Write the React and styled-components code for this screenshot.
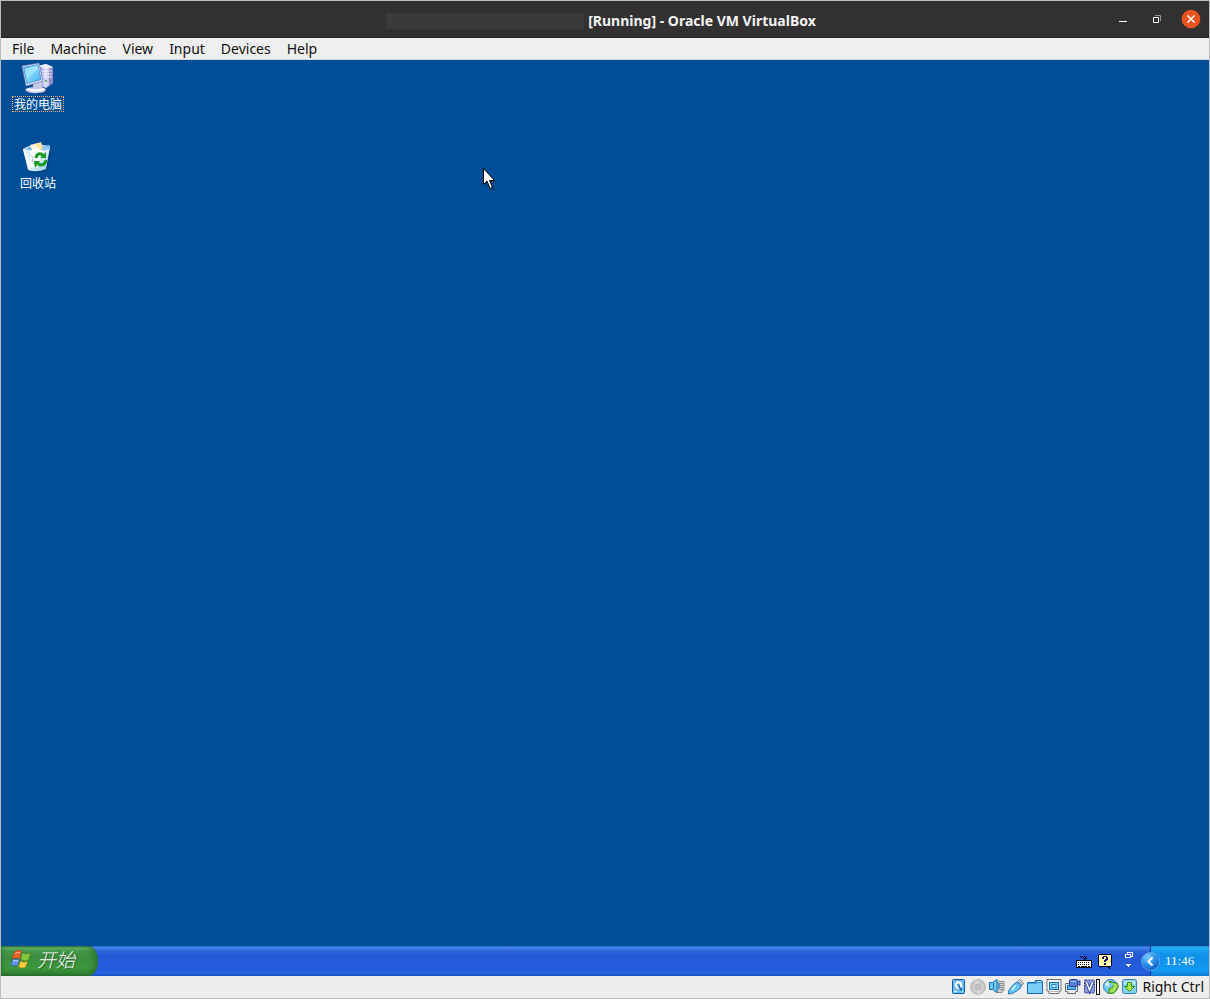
import * as React from 'react'
import styled, { createGlobalStyle } from 'styled-components'

const GlobalStyle = createGlobalStyle`
  * {
    box-sizing: border-box;
  }
  body {
    margin: 0;
    background: #eeeeee;
    font-family: 'Noto Sans', 'Open Sans', sans-serif;
  }
  button {
    margin: 0;
    padding: 0;
    border: 0;
    background: none;
    color: inherit;
    font: inherit;
  }
`

const Window = styled.div`
  display: flex;
  flex-direction: column;
  min-height: 100vh;
  border: 1px solid #bcbcbc;
`

const TitleBar = styled.header`
  display: grid;
  grid-template-columns: 1fr auto 1fr;
  align-items: center;
  height: 37px;
  background: #333031;
  border-bottom: 1px solid #231f20;
`

const Title = styled.h1`
  grid-column: 2;
  display: flex;
  align-items: center;
  gap: 4px;
  margin: 0;
  padding: 3px 8px 0 0;
  color: #f4f4f4;
  font-size: 14px;
  font-weight: 700;
  line-height: 18px;
  white-space: nowrap;
`

const HiddenName = styled.span`
  width: 198px;
  height: 16px;
  background: #3b3a3a;
`

const WindowButtons = styled.div`
  display: flex;
  justify-content: flex-end;
  gap: 10px;
  padding-right: 6px;
`

const WindowButton = styled.button`
  width: 24px;
  height: 24px;

  svg {
    display: block;
  }
`

const MenuBar = styled.nav`
  display: flex;
  gap: 16px;
  height: 22px;
  padding: 0 11px;
  background: #efefef;
  border-bottom: 1px solid #d6d6d6;
`

const MenuItem = styled.button`
  color: #111;
  font-size: 14px;
  line-height: 21px;
`

const Desktop = styled.main`
  position: relative;
  flex: 1;
  background: #004e98;
`

const Shortcuts = styled.div`
  display: flex;
  flex-direction: column;
  align-items: flex-start;
  gap: 29px;
  padding-top: 2px;
`

const Shortcut = styled.button`
  display: flex;
  flex-direction: column;
  align-items: center;
  gap: 1px;
  width: 74px;
`

const ShortcutLabel = styled.span`
  padding: 0 1px;
  border: 1px dotted ${props => (props.$focused ? '#f0b070' : 'transparent')};
  color: white;
  font-family: 'Noto Sans CJK SC', sans-serif;
  font-size: 12px;
  line-height: 14px;
`

const Pointer = styled.svg`
  position: absolute;
  left: 481px;
  top: 108px;
`

const Taskbar = styled.footer`
  display: flex;
  align-items: stretch;
  height: 30px;
  background: linear-gradient(
    #2a62cd 0,
    #4389f0 2px,
    #3069dc 4px,
    #2459d6 9px,
    #245cdc 22px,
    #2663e0 27px,
    #1d4fc0 30px
  );
`

const StartButton = styled.button`
  display: flex;
  align-items: center;
  gap: 4px;
  width: 97px;
  padding: 0 0 4px 9px;
  border-radius: 0 10px 10px 0 / 0 15px 15px 0;
  background: linear-gradient(
    #2f7433 0,
    #67b466 2px,
    #46984a 5px,
    #3b8e3f 11px,
    #3c973c 22px,
    #348634 27px,
    #246b2b 30px
  );
  box-shadow: inset -5px 0 6px -2px #2b702d, inset 3px 0 4px -2px #2b702d;
  color: white;
  font-family: 'Noto Sans CJK SC', sans-serif;
  font-size: 19px;
  font-style: italic;
  font-weight: 300;
  line-height: 24px;
  text-shadow: 1px 1px 1px #285c2a;
`

const LanguageBar = styled.div`
  display: flex;
  align-items: center;
  gap: 5px;
  margin-left: auto;
  padding-right: 15px;
`

const LanguageButton = styled.button`
  width: ${props => (props.$narrow ? 12 : 16)}px;
  height: 20px;
  margin-left: ${props => (props.$narrow ? 5 : 0)}px;

  svg {
    display: block;
  }
`

const Tray = styled.div`
  position: relative;
  display: flex;
  align-items: center;
  width: 59px;
  padding-left: 14px;
  border-left: 1px solid #0c3f92;
  background: linear-gradient(
    #1a7fd8 0,
    #1fb4f6 2px,
    #149bef 5px,
    #118fe9 12px,
    #119af0 25px,
    #0e7bd0 30px
  );
`

const TrayToggle = styled.button`
  position: absolute;
  left: -11px;
  top: 5px;
  width: 20px;
  height: 20px;

  svg {
    display: block;
  }
`

const Clock = styled.time`
  color: white;
  font-family: 'Liberation Serif', serif;
  font-size: 13px;
  line-height: 16px;
`

const StatusBar = styled.footer`
  display: flex;
  align-items: center;
  justify-content: flex-end;
  gap: 3px;
  height: 22px;
  padding-right: 5px;
  background: #eeeeee;
`

const StatusButton = styled.button`
  width: 16px;
  height: 16px;

  svg {
    display: block;
    overflow: visible;
  }
`

const HostKey = styled.span`
  padding-left: 1px;
  color: #111;
  font-size: 14px;
  line-height: 20px;
`

const ComputerIcon = () => (
  <svg width="34" height="33" viewBox="1 0 34 33" aria-hidden="true">
    <defs>
      <linearGradient id="screen" x1="0" y1="0" x2="1" y2="1">
        <stop offset="0" stopColor="#36a4ea" />
        <stop offset=".45" stopColor="#84dcfb" />
        <stop offset="1" stopColor="#3fa8ee" />
      </linearGradient>
      <linearGradient id="tower" x1="0" y1="0" x2="1" y2="0">
        <stop offset="0" stopColor="#8482c6" />
        <stop offset=".5" stopColor="#dcdcf6" />
        <stop offset="1" stopColor="#a5a2d8" />
      </linearGradient>
    </defs>
    <ellipse cx="19" cy="29" rx="11" ry="3" fill="#00356f" opacity=".6" />
    <path d="M18 4 L26 2 L33 5 L33 21 L26 26 L19 23 Z" fill="url(#tower)" />
    <path d="M18 4 L26 2 L33 5 L26 7 Z" fill="#eeeefc" />
    <path d="M29 7 L33 5 L33 21 L29 24 Z" fill="#8f8cca" />
    <path d="M22 9 H32 M23 12 H32 M23 15 H32" stroke="#ffffff" opacity=".8" />
    <path d="M25 19h2" stroke="#5fbf57" strokeWidth="2" />
    <path d="M13 20 L21 19 L22 25 L26 27 Q26 31 18 31 Q9 32 5 28 Q6 26 13 25 Z" fill="#c7c8e6" />
    <path d="M7 27 Q15 30 24 27" stroke="#ffffff" strokeWidth="2" fill="none" />
    <path d="M2 4 L19 1 L23 19 L6 24 Z" fill="#e4e7f7" stroke="#7272b0" strokeWidth=".7" />
    <path d="M3.500 5.500 L18 2.500 L21 17.500 L7 21.500 Z" fill="url(#screen)" stroke="#277bc2" strokeWidth=".6" />
    <path d="M4.500 6.500 L17 4 L18 8 Q10 11 7 17 Z" fill="#bdf0ff" opacity=".6" />
  </svg>
)

const RecycleIcon = () => (
  <svg width="34" height="33" viewBox="1 0 34 33" aria-hidden="true">
    <defs>
      <linearGradient id="bin" x1="0" y1="0" x2="1" y2="1">
        <stop offset="0" stopColor="#bfe2f6" />
        <stop offset=".45" stopColor="#f4fbff" />
        <stop offset="1" stopColor="#8bc3ed" />
      </linearGradient>
    </defs>
    <path d="M9 30 Q19 35 27 29 L31 12 L27 9 Z" fill="#00336b" opacity=".5" />
    <path d="M3 8 Q16 0 30 6 L26 28 Q17 32 8 29 Z" fill="url(#bin)" />
    <path d="M5 8 Q17 2 28 7 Q18 12 5 8Z" fill="#70b3e1" />
    <path d="M10 4 L18 2 L21 8 L13 11 Z" fill="#fff7d8" />
    <path d="M15 3 L21 1 L23 8 L17 10 Z" fill="#ffe4a0" />
    <path d="M10 10 L17 6 L22 11 L17 27 L11 26 Z" fill="#ffffff" />
    <path d="M22 5 L30 4 L29 8 L24 10 Z" fill="#8cc6ef" />
    <path d="M4 8 Q5 13 10 28" stroke="#ffffff" strokeWidth="2" fill="none" />
    <path d="M9 13 L13 16 L12 21 L15 24" stroke="#b9c6e4" fill="none" />
    <g fill="none" stroke="#149a1d" strokeWidth="3">
      <path d="M16 17 Q17 12 21 13 L24 15" />
      <path d="M26 19 Q25 24 21 24 L18 23" />
    </g>
    <path d="M26 11 V17 H20 Z M14 20 H20 L15 27 Z" fill="#149a1d" />
  </svg>
)

const FlagIcon = () => (
  <svg width="23" height="22" viewBox="0 0 22 20" aria-hidden="true">
    <path d="M4 3.500 Q8 .500 11 2.500 L9 10 Q6 8 2 10 Z" fill="#f0602c" stroke="#8d3c16" strokeWidth=".5" />
    <path d="M12 3.500 Q15 6.500 20 3.500 L18 11 Q14 13 10 10 Z" fill="#86c63d" stroke="#326b1c" strokeWidth=".5" />
    <path d="M2 11 Q6 9 9 11 L7 17 Q4 15 1 17 Z" fill="#5f96f2" stroke="#264f9c" strokeWidth=".5" />
    <path d="M10 12 Q13 14 17 12 L15 18 Q11 20 8 17 Z" fill="#f8cf38" stroke="#876b16" strokeWidth=".5" />
    <path d="M5 5 Q7 3 10 4" stroke="#ffb28c" fill="none" />
    <path d="M3 12 Q5 11 8 12" stroke="#b8d2ff" fill="none" />
  </svg>
)

const statusIcons = [
  {
    label: 'Hard disks',
    art: (
      <>
        <rect x="1.500" y=".5" width="12" height="14" rx="1" fill="#66c0f6" stroke="#155aa5" />
        <circle cx="7.500" cy="6" r="4.500" fill="#effaff" stroke="#2b7fc6" strokeWidth=".6" />
        <circle cx="7.500" cy="6" r="1.500" fill="#3e99dd" />
        <path d="M7.500 7 L11 11.500" stroke="#155aa5" strokeWidth="1.500" />
        <path d="M3 12.500h3M11 12.500h1" stroke="#d8f3ff" strokeWidth="1.300" />
      </>
    ),
  },
  {
    label: 'Optical drives',
    art: (
      <>
        <circle cx="8" cy="8" r="7.300" fill="#cccccc" stroke="#aaaaaa" />
        <path d="M8 8 L4 2 Q7 1 9 1 Z M8 8 L12 14 Q9 15 7 15 Z" fill="#d6d6d6" />
        <circle cx="8" cy="8" r="2.300" fill="#e4e4e4" stroke="#a0a0a0" />
        <circle cx="8" cy="8" r=".8" fill="#999999" />
      </>
    ),
  },
  {
    label: 'Audio',
    art: (
      <>
        <path d="M9 2.500h6v9h-2v2H7v-2h2z" fill="#d6d6d6" stroke="#909090" />
        <path d="M11 4.500h3M11 6.500h3M11 8.500h3M11 10.500h3" stroke="#8d8d8d" />
        <path d="M.500 3.500h3L8 .500v13l-4.500-3h-3z" fill="#6dcdf9" stroke="#1a6bae" />
        <path d="M4.500 4v6" stroke="#1a6bae" />
        <path d="M10 4v6" stroke="#2d8dcb" strokeWidth="1.500" />
      </>
    ),
  },
  {
    label: 'USB devices',
    art: (
      <>
        <path d="M9 3 L11.500 .500 L15.500 4 L13 7 Z" fill="#e8e8e8" stroke="#777777" />
        <path d="M11.500 3l1 1M13 4.500l1 1" stroke="#555555" />
        <path d="M6.500 4.500 Q9 2 12 5 Q14.500 8 11.500 10 L7 13 Q4 15 .500 15 Q0 12 2.500 9 Z" fill="#6cc8f8" stroke="#2272b5" />
        <path d="M7.500 6.500 L4 11" stroke="#c9f1ff" strokeWidth="2" />
      </>
    ),
  },
  {
    label: 'Shared folders',
    art: (
      <>
        <path d="M.5 14.500v-11h7l1-2h6l1 1v12z" fill="#3e9ce0" stroke="#1869ad" />
        <path d="M1 5h8l1-1h5v10H1z" fill="#7bcef7" />
        <path d="M10 2.500h4" stroke="#b9ebff" />
      </>
    ),
  },
  {
    label: 'Display',
    art: (
      <>
        <path d="M1 .500h14v11.500h-2v2.500H3V12H1z" fill="#ffffff" stroke="#707070" />
        <rect x="3.500" y="3.500" width="9" height="7" fill="#83d5fa" stroke="#1769b3" />
        <rect x="6" y="5.500" width="4" height="3" fill="#d8f5ff" stroke="#2b86c9" />
        <path d="M4 12.500h8" stroke="#bbbbbb" />
      </>
    ),
  },
  {
    label: 'Recording',
    art: (
      <>
        <path d="M.500 4.500h12v8h-2v2h-8v-2h-2z" fill="#eeeeee" stroke="#6d6d6d" />
        <rect x="2.500" y="6.500" width="8" height="4" fill="#58b9f0" stroke="#1c70b5" />
        <rect x="4.500" y=".500" width="8" height="7" rx="1" fill="#587fd6" stroke="#28448f" />
        <path d="M12.500 3l2.500-1.500v5L12.500 5z" fill="#6089dd" stroke="#28448f" />
        <path d="M6 2.500h5" stroke="#a8c1fa" />
      </>
    ),
  },
  {
    label: 'Processor',
    art: (
      <>
        <rect x=".500" y="1" width="10" height="13" rx="1" fill="#8291d7" stroke="#293d8d" strokeDasharray="2 1" />
        <rect x="2" y="2" width="7" height="11" fill="#8f9de0" />
        <path d="M2.500 3.500 L5.500 11 L8.500 3.500" stroke="#3a4da6" strokeWidth="3.500" fill="none" />
        <path d="M2.500 3.500 L5.500 11 L8.500 3.500" stroke="#ffffff" strokeWidth="1.500" fill="none" />
        <rect x="12.500" y=".500" width="3" height="15" fill="#ffffff" stroke="#111111" />
      </>
    ),
  },
  {
    label: 'Mouse integration',
    art: (
      <>
        <circle cx="7.500" cy="7.500" r="7" fill="#74c8f5" stroke="#2a79b5" />
        <path d="M2 6 Q4 1 8 2 L5 8 Z" fill="#d4f2ff" />
        <path d="M5.500 3 Q9 1 10 5 L10.500 7 L8.500 9 L6 10 L5.500 14.500 L10.500 14 Q13.500 12.500 13.500 10 L15.500 8.500 L14.500 4.500 L10 3.500 Z" fill="#8edb3b" stroke="#39811c" strokeWidth=".9" />
        <path d="M9 4.500l3 1.500v4l-4 3" stroke="#c9f58c" fill="none" />
      </>
    ),
  },
  {
    label: 'Keyboard capture',
    art: (
      <>
        <rect x=".500" y=".500" width="14" height="14" rx="2" fill="#86d2f7" stroke="#3b7faf" />
        <path d="M2 2h11v3H2z" fill="#b5e9fc" />
        <path d="M5.500 3.500h4v4h3l-5 5-5-5h3z" fill="#a4eb42" stroke="#38851c" />
      </>
    ),
  },
]

const menus = ['File', 'Machine', 'View', 'Input', 'Devices', 'Help']

export default function App() {
  return (
    <Window>
      <GlobalStyle />
      <TitleBar>
        <Title>
          <HiddenName />
          [Running] - Oracle VM VirtualBox
        </Title>
        <WindowButtons>
          <WindowButton aria-label="Minimize">
            <svg width="24" height="24">
              <path d="M8 14.500h8" stroke="#ffffff" />
            </svg>
          </WindowButton>
          <WindowButton aria-label="Restore">
            <svg width="24" height="24" fill="none">
              <path d="M10 8.500h5.500V14" stroke="#99989a" />
              <path d="M8.500 10.500h5v5h-5z" stroke="#ffffff" />
            </svg>
          </WindowButton>
          <WindowButton aria-label="Close">
            <svg width="24" height="24">
              <circle cx="12" cy="12" r="9.300" fill="#e95420" />
              <path d="M8.500 8.500l7 7m0-7l-7 7" stroke="#ffffff" strokeWidth="1.500" />
            </svg>
          </WindowButton>
        </WindowButtons>
      </TitleBar>
      <MenuBar>
        {menus.map(name => <MenuItem key={name}>{name}</MenuItem>)}
      </MenuBar>
      <Desktop>
        <Shortcuts>
          <Shortcut>
            <ComputerIcon />
            <ShortcutLabel $focused>我的电脑</ShortcutLabel>
          </Shortcut>
          <Shortcut>
            <RecycleIcon />
            <ShortcutLabel>回收站</ShortcutLabel>
          </Shortcut>
        </Shortcuts>
        <Pointer width="16" height="24" viewBox="0 0 16 24" aria-hidden="true">
          <path d="M3 3V20L7 16L10 23H13V20L11 16H15Z" fill="#003a75" opacity=".6" />
          <path d="M1.500.5V16.500L5 13L8 20.500L10.500 19.500L7.500 12.500H12.500Z" fill="#ffffff" stroke="#000000" />
        </Pointer>
      </Desktop>
      <Taskbar>
        <StartButton>
          <FlagIcon />
          开始
        </StartButton>
        <LanguageBar>
          <LanguageButton aria-label="Keyboard">
            <svg width="16" height="20" shapeRendering="crispEdges">
              <path d="M4 5.500h1M5 6.500h1M6 5.500h1M7 6.500h1M8 5.500h1M9 6.500h1M10 5.500h1M11 7.500h-3M8 8.500h1" stroke="#000000" />
              <rect x="0" y="9" width="16" height="8" rx="1" fill="#000000" />
              <rect x="1" y="10" width="14" height="6" fill="#ffffff" />
              <path d="M2 11.500h12M2 13.500h12" stroke="#000000" strokeDasharray="1 1" />
              <path d="M2 15.500h2M12 15.500h2M5 15.500h6" stroke="#000000" />
            </svg>
          </LanguageButton>
          <LanguageButton aria-label="Help">
            <svg width="16" height="20" shapeRendering="crispEdges">
              <path d="M2 3h12v1h1v11h-1v1h-1v2h-1v-1h-1v-1H2v-1H1V4h1z" fill="#000000" />
              <path d="M2 4h12v11H2z" fill="#ffffa0" />
              <path d="M2 4h2v2H2zM12 4h2v2h-2zM2 12h2v3H2zM12 12h2v3h-2z" fill="#ffffff" />
              <path d="M6 5h4v1h1v3h-1v1H9v1H7V9h1V8h1V6H7v2H5V6h1zM7 12h2v2H7z" fill="#101070" />
            </svg>
          </LanguageButton>
          <LanguageButton $narrow aria-label="Language bar options">
            <svg width="12" height="20" fill="none" shapeRendering="crispEdges">
              <path d="M4.500 3V1.500h5v4H8" stroke="#ffffff" />
              <path d="M2.500 3.500h5v3h-5z" stroke="#ffffff" />
              <path d="M3 13h5L5.500 16z" fill="#ffffff" />
            </svg>
          </LanguageButton>
        </LanguageBar>
        <Tray>
          <TrayToggle aria-label="Show hidden icons">
            <svg width="20" height="20">
              <defs>
                <radialGradient id="toggle" cx=".35" cy=".25" r=".8">
                  <stop offset="0" stopColor="#7bc7ff" />
                  <stop offset=".6" stopColor="#228be9" />
                  <stop offset="1" stopColor="#1555bd" />
                </radialGradient>
              </defs>
              <circle cx="10.500" cy="10.500" r="9" fill="url(#toggle)" stroke="#76b8f6" strokeWidth=".7" />
              <path d="M12.500 6.500L8.500 10.500L12.500 14.500" fill="none" stroke="#ffffff" strokeWidth="2" />
            </svg>
          </TrayToggle>
          <Clock>11:46</Clock>
        </Tray>
      </Taskbar>
      <StatusBar>
        {statusIcons.map(({ label, art }) => (
          <StatusButton key={label} aria-label={label}>
            <svg width="16" height="16" viewBox="0 0 16 16">{art}</svg>
          </StatusButton>
        ))}
        <HostKey>Right Ctrl</HostKey>
      </StatusBar>
    </Window>
  )
}
